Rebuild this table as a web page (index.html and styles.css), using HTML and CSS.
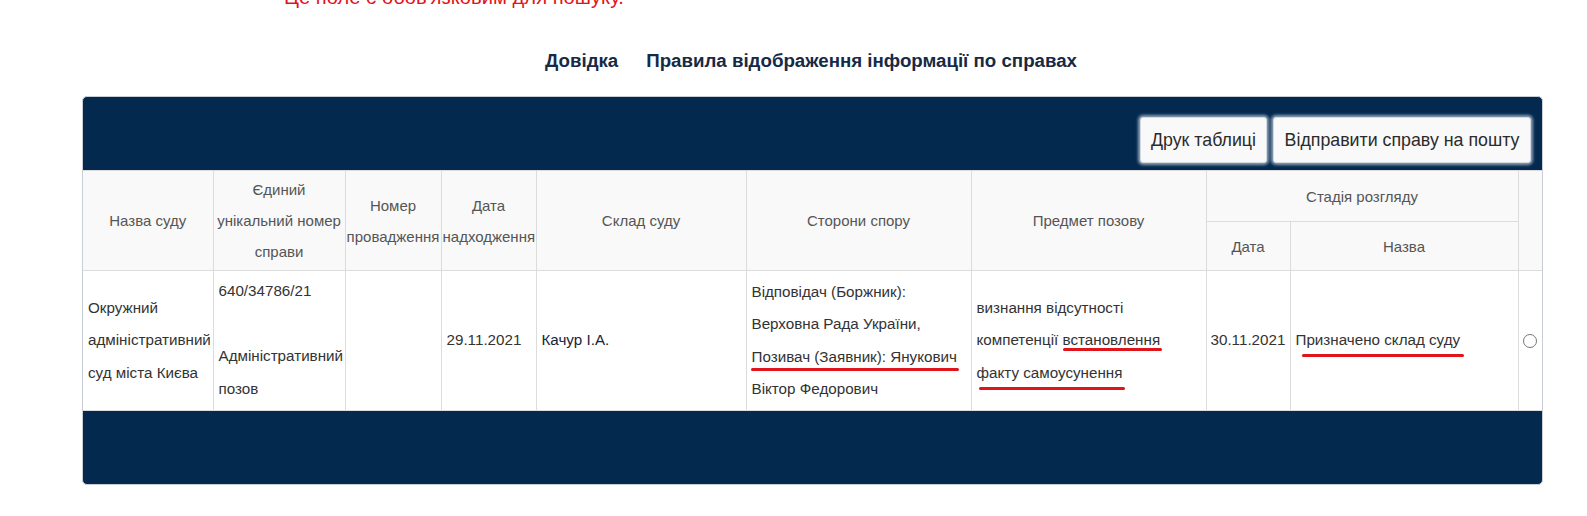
FILE: index.html
```html
<!DOCTYPE html>
<html lang="uk">
<head>
<meta charset="utf-8">
<title>Справи</title>
<link rel="stylesheet" href="styles.css">
</head>
<body>
<div class="error">Це поле є обов'язковим для пошуку.</div>
<nav class="links">
  <a href="#">Довідка</a>
  <a href="#">Правила відображення інформації по справах</a>
</nav>
<div class="panel">
  <div class="panel-head">
    <button class="btn btn-print" type="button">Друк таблиці</button>
    <button class="btn btn-mail" type="button">Відправити справу на пошту</button>
  </div>
  <table class="cases">
    <colgroup>
      <col class="c1"><col class="c2"><col class="c3"><col class="c4"><col class="c5">
      <col class="c6"><col class="c7"><col class="c8"><col class="c9"><col class="c10">
    </colgroup>
    <thead>
      <tr class="h1">
        <th rowspan="2">Назва суду</th>
        <th rowspan="2">Єдиний унікальний номер справи</th>
        <th rowspan="2">Номер провадження</th>
        <th rowspan="2">Дата надходження</th>
        <th rowspan="2">Склад суду</th>
        <th rowspan="2">Сторони спору</th>
        <th rowspan="2">Предмет позову</th>
        <th colspan="2">Стадія розгляду</th>
        <th rowspan="2"></th>
      </tr>
      <tr class="h2">
        <th>Дата</th>
        <th>Назва</th>
      </tr>
    </thead>
    <tbody>
      <tr class="row">
        <td>Окружний адміністративний суд міста Києва</td>
        <td class="top">640/34786/21<br><br>Адміністративний позов</td>
        <td></td>
        <td>29.11.2021</td>
        <td class="judge">Качур І.А.</td>
        <td>Відповідач (Боржник):<br>Верховна Рада України,<br><span class="mark m1">Позивач (Заявник): Янукович</span><br>Віктор Федорович</td>
        <td>визнання відсутності<br>компетенції <span class="mark m2">встановлення</span><br><span class="mark m3">факту самоусунення</span></td>
        <td class="date2">30.11.2021</td>
        <td class="stage"><span class="mark m4">Призначено склад суду</span></td>
        <td class="pick"><input type="radio" name="case" class="radio"></td>
      </tr>
    </tbody>
  </table>
  <div class="panel-foot"></div>
</div>
</body>
</html>
```

FILE: styles.css
```css
html, body {
  margin: 0;
  padding: 0;
  background: #fff;
  font-family: "Liberation Sans", Arial, sans-serif;
  overflow: hidden;
}

.error {
  margin-top: -14px;
  height: 22px;
  line-height: 22px;
  padding-left: 284px;
  font-size: 20.2px;
  color: #e2141b;
}

.links {
  display: flex;
  gap: 28px;
  margin-top: 41px;
  padding-left: 545px;
  line-height: 24px;
}

.links a {
  font-size: 18.7px;
  font-weight: bold;
  color: #172a45;
  text-decoration: none;
}

.panel {
  margin: 23px 44px 0 82px;
  background: #03294f;
  border: 1px solid #c9ced6;
  border-radius: 5px;
  overflow: hidden;
}

.panel-head {
  height: 53px;
  padding: 20px 11px 0 0;
  display: flex;
  justify-content: flex-end;
  align-items: flex-start;
  gap: 6px;
}

.btn {
  height: 46px;
  padding: 0;
  font-family: "Liberation Sans", Arial, sans-serif;
  font-size: 17.8px;
  white-space: nowrap;
  color: #2b2b2b;
  background: #f9f9f9;
  border: 1px solid #d4d9e0;
  border-radius: 3px;
  box-shadow: 0 0 3px 2px rgba(190, 200, 215, 0.75);
}

.btn-print { width: 127px; }
.btn-mail { width: 258px; }

.cases {
  width: 100%;
  table-layout: fixed;
  border-collapse: collapse;
  border-left-style: hidden;
  border-right-style: hidden;
  background: #fff;
}

.c1 { width: 130px; }
.c2 { width: 132px; }
.c3 { width: 96px; }
.c4 { width: 95px; }
.c5 { width: 210px; }
.c6 { width: 225px; }
.c7 { width: 235px; }
.c8 { width: 84px; }
.c9 { width: 228px; }
.c10 { width: 24px; }

.cases th,
.cases td {
  border: 1px solid #dcdcdc;
}

.cases th {
  background: #f9f9f9;
  color: #555;
  font-weight: normal;
  font-size: 15px;
  line-height: 31px;
  padding: 2px 1px;
  text-align: center;
  vertical-align: middle;
}

.h1 { height: 51px; }
.h2 { height: 49px; }

.cases td {
  color: #333;
  font-size: 15.2px;
  line-height: 32.5px;
  padding: 4px 4px 4px 5px;
  vertical-align: middle;
  text-align: left;
}

.row { height: 140px; }

.cases td.top {
  vertical-align: top;
}

.cases td.judge {
  color: #1a2438;
}

.cases td.date2 {
  padding-left: 4px;
}

.cases td.stage {
  padding-left: 5px;
}

.cases td.pick {
  text-align: center;
  padding: 0;
}

.radio {
  margin: 0;
  width: 14px;
  height: 14px;
  vertical-align: middle;
}

.mark {
  position: relative;
  white-space: nowrap;
}

.mark::after {
  content: "";
  position: absolute;
  height: 3px;
  background: #e0151b;
  border-radius: 2px;
}

.m1::after { left: -1px; right: -2px; bottom: -6px; }
.m2::after { left: 0; right: -2px; bottom: -3px; }
.m3::after { left: 2px; right: -3px; bottom: -9px; }
.m4::after { left: 6px; right: -4px; bottom: -9px; }

.panel-foot {
  height: 73px;
}
```
